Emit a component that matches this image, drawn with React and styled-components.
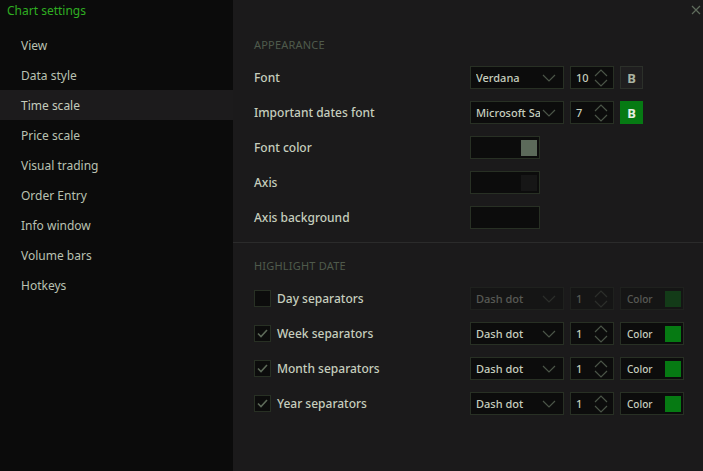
import React from "react";
import styled, { createGlobalStyle } from "styled-components";

const Global = createGlobalStyle`
  html, body { margin: 0; padding: 0; background: #1b1a1b; }
  body { font-family: "Noto Sans", "DejaVu Sans", sans-serif; }
`;

const Window = styled.div`
  display: flex;
  width: 703px;
  height: 471px;
  overflow: hidden;
  background: #1b1a1b;
`;

const Sidebar = styled.div`
  width: 233px;
  flex-shrink: 0;
  background: #0b0b0b;
  display: flex;
  flex-direction: column;
`;

const AppTitle = styled.div`
  color: #2fae22;
  font-size: 12px;
  padding: 2px 0 0 7px;
  height: 28px;
  box-sizing: border-box;
`;

const NavItem = styled.div`
  height: 30px;
  display: flex;
  align-items: center;
  padding-left: 21px;
  font-size: 12px;
  color: ${({ active }) => (active ? "#c4ccbc" : "#b9c1b1")};
  background: ${({ active }) => (active ? "#1c1b1c" : "transparent")};
`;

const NavList = styled.div`
  padding-top: 2px;
  display: flex;
  flex-direction: column;
`;

const Main = styled.div`
  flex: 1;
  position: relative;
  display: flex;
  flex-direction: column;
`;

const Close = styled.div`
  position: absolute;
  top: 5px;
  right: 3px;
  width: 10px;
  height: 10px;
  color: #5f6b5c;

  svg {
    display: block;
  }
`;

const Section = styled.div`
  padding: ${({ pad }) => pad};
  display: flex;
  flex-direction: column;
`;

const Divider = styled.div`
  height: 1px;
  background: #2b2b2b;
  margin-top: ${({ top }) => top}px;
`;

const Heading = styled.div`
  font-size: 11px;
  color: #4f5a4c;
  letter-spacing: 0.2px;
  height: 14px;
  line-height: 14px;
  margin-bottom: 8px;
`;

const Row = styled.div`
  display: flex;
  align-items: center;
  height: 35px;
`;

const Label = styled.div`
  width: 216px;
  font-size: 12px;
  font-weight: 500;
  color: #c6cebe;
  display: flex;
  align-items: center;
  gap: 6px;
`;

const Controls = styled.div`
  display: flex;
  gap: 6px;
  align-items: center;
  opacity: ${({ disabled }) => (disabled ? 0.35 : 1)};
`;

const Box = styled.div`
  box-sizing: border-box;
  height: 23px;
  background: #0c0c0c;
  border: 1px solid #283024;
  display: flex;
  align-items: center;
  color: #c6cebe;
  font-size: 11px;
  font-weight: 500;
`;

const Select = styled(Box)`
  width: 94px;
  padding-left: 5px;
  justify-content: space-between;
  overflow: hidden;
  white-space: nowrap;
`;

const SelectText = styled.span`
  overflow: hidden;
  width: 64px;
  white-space: nowrap;
`;

const Spin = styled(Box)`
  width: 44px;
  padding-left: 5px;
  justify-content: space-between;
`;

const BoldBtn = styled(Box)`
  width: 23px;
  justify-content: center;
  font-size: 13px;
  font-weight: 700;
  background: ${({ on }) => (on ? "#067a13" : "#1f1e1f")};
  border-color: ${({ on }) => (on ? "#067a13" : "#2c302a")};
  color: ${({ on }) => (on ? "#e7efe3" : "#aab3a2")};
`;

const ColorBox = styled(Box)`
  width: ${({ w }) => w || 70}px;
  padding: 0 2px 0 6px;
  justify-content: space-between;
  font-size: 10px;
`;

const Swatch = styled.div`
  width: 16px;
  height: 16px;
  background: ${({ color }) => color};
`;

const Check = styled.div`
  box-sizing: border-box;
  width: 17px;
  height: 17px;
  border: 1px solid #283024;
  background: #0c0c0c;
  display: flex;
  align-items: center;
  justify-content: center;
`;

const Chevron = () => (
  <svg width="14" height="8" viewBox="0 0 14 8" style={{ marginRight: 7 }}>
    <path d="M1 1 L7 7 L13 1" fill="none" stroke="#4b5548" strokeWidth="1.2" />
  </svg>
);

const Arrows = () => (
  <svg width="14" height="18" viewBox="0 0 14 18" style={{ marginRight: 5 }}>
    <path d="M1 7 L7 1 L13 7 M1 11 L7 17 L13 11" fill="none" stroke="#4b5548" strokeWidth="1.2" />
  </svg>
);

const Tick = () => (
  <svg width="11" height="9" viewBox="0 0 11 9">
    <path d="M1 4.5 L4 7.5 L10 1" fill="none" stroke="#5d6a59" strokeWidth="1.6" />
  </svg>
);

const nav = [
  "View",
  "Data style",
  "Time scale",
  "Price scale",
  "Visual trading",
  "Order Entry",
  "Info window",
  "Volume bars",
  "Hotkeys",
];

const separators = [
  { name: "Day separators", on: false },
  { name: "Week separators", on: true },
  { name: "Month separators", on: true },
  { name: "Year separators", on: true },
];

export default function App() {
  return (
    <Window>
      <Global />
      <Sidebar>
        <AppTitle>Chart settings</AppTitle>
        <NavList>
          {nav.map((n) => (
            <NavItem key={n} active={n === "Time scale"}>
              {n}
            </NavItem>
          ))}
        </NavList>
      </Sidebar>
      <Main>
        <Close>
          <svg width="10" height="10" viewBox="0 0 10 10">
            <path d="M1 1 L9 9 M9 1 L1 9" stroke="currentColor" strokeWidth="1.2" />
          </svg>
        </Close>
        <Section pad="38px 20px 0 21px">
          <Heading>APPEARANCE</Heading>
          <Row>
            <Label>Font</Label>
            <Controls>
              <Select>
                <SelectText>Verdana</SelectText>
                <Chevron />
              </Select>
              <Spin>
                10
                <Arrows />
              </Spin>
              <BoldBtn>B</BoldBtn>
            </Controls>
          </Row>
          <Row>
            <Label>Important dates font</Label>
            <Controls>
              <Select>
                <SelectText>Microsoft Sa</SelectText>
                <Chevron />
              </Select>
              <Spin>
                7
                <Arrows />
              </Spin>
              <BoldBtn on>B</BoldBtn>
            </Controls>
          </Row>
          <Row>
            <Label>Font color</Label>
            <ColorBox>
              <span />
              <Swatch color="#5c6a5a" />
            </ColorBox>
          </Row>
          <Row>
            <Label>Axis</Label>
            <ColorBox>
              <span />
              <Swatch color="#161616" />
            </ColorBox>
          </Row>
          <Row>
            <Label>Axis background</Label>
            <ColorBox>
              <span />
              <Swatch color="#0c0c0c" />
            </ColorBox>
          </Row>
        </Section>
        <Divider top={7} />
        <Section pad="16px 20px 0 21px">
          <Heading>HIGHLIGHT DATE</Heading>
          {separators.map((s) => (
            <Row key={s.name}>
              <Label>
                <Check>{s.on && <Tick />}</Check>
                {s.name}
              </Label>
              <Controls disabled={!s.on}>
                <Select>
                  <SelectText>Dash dot</SelectText>
                  <Chevron />
                </Select>
                <Spin>
                  1
                  <Arrows />
                </Spin>
                <ColorBox w={64}>
                  Color
                  <Swatch color="#067a13" />
                </ColorBox>
              </Controls>
            </Row>
          ))}
        </Section>
      </Main>
    </Window>
  );
}
